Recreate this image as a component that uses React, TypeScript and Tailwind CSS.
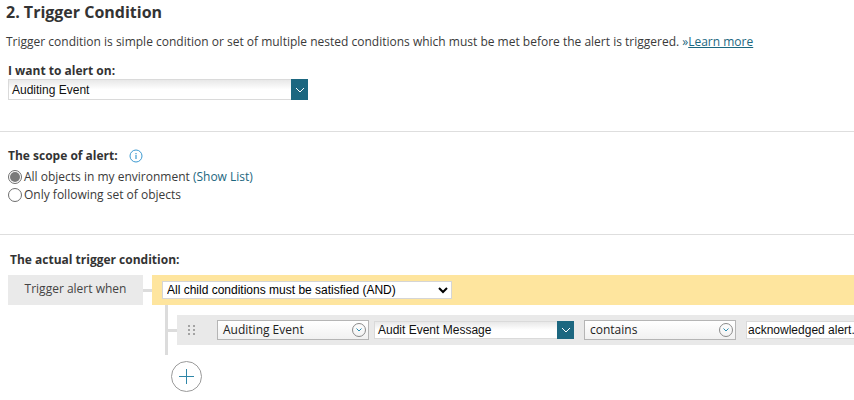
const openSans = 'font-["Open_Sans",sans-serif]';

function Chevron({ className }: { className: string }) {
  return (
    <svg className={className} width="10" height="6" viewBox="0 0 10 6" fill="none" stroke="currentColor" strokeWidth="1">
      <path d="M1 1l4 4 4-4" />
    </svg>
  );
}

function TealSelect({ value, width, height }: { value: string; width: string; height: string }) {
  return (
    <div className={`flex ${width} ${height} shrink-0`}>
      <div className="flex-1 min-w-0 flex items-center pl-[3px] bg-gradient-to-b from-[#e8e8e8] via-white to-white border border-[#dadada] border-r-0 font-['Liberation_Sans',sans-serif] text-[12px] text-[#111]">
        {value}
      </div>
      <div className="w-[17px] bg-[#1c6780] flex items-center justify-center text-white">
        <Chevron className="text-white" />
      </div>
    </div>
  );
}

function RoundSelect({ value, width }: { value: string; width: string }) {
  return (
    <div className={`flex items-center justify-between h-[20px] ${width} shrink-0 border border-[#b5b5b5] bg-gradient-to-b from-white to-[#f1f1f1] pl-[5px] pr-[2px] ${openSans} text-[12px] text-[#222]`}>
      <span>{value}</span>
      <span className="w-[14px] h-[14px] rounded-full border border-[#8a8a8a] flex items-center justify-center">
        <svg width="6" height="4" viewBox="0 0 6 4" fill="none" stroke="#2a8cb0" strokeWidth="1">
          <path d="M0.5 0.5l2.5 2.5 2.5-2.5" />
        </svg>
      </span>
    </div>
  );
}

function Radio({ checked }: { checked?: boolean }) {
  return (
    <span className="w-[14px] h-[14px] rounded-full border border-[#6e6e6e] bg-white flex items-center justify-center shrink-0">
      {checked && <span className="w-[10px] h-[10px] rounded-full bg-[#7a7a7a]" />}
    </span>
  );
}

export default function App() {
  return (
    <div className={`w-[854px] h-[400px] overflow-hidden bg-white text-[#3a3a3a] ${openSans}`}>
      {/* Header */}
      <h2 className="pl-[6px] pt-[1px] h-[23px] text-[16px] leading-[22px] font-bold text-[#333]">2. Trigger Condition</h2>
      <p className="pl-[6px] mt-[10px] h-[17px] text-[12px] leading-[17px] whitespace-nowrap">
        Trigger condition is simple condition or set of multiple nested conditions which must be met before the alert is triggered.{' '}
        <span className="text-[#1c6780]">»</span>
        <span className="text-[#1c6780] underline">Learn more</span>
      </p>

      {/* Alert on */}
      <div className="pl-[8px] mt-[13px]">
        <div className="h-[16px] text-[12px] leading-[16px] font-bold text-[#333]">I want to alert on:</div>
        <TealSelect value="Auditing Event" width="w-[300px]" height="h-[21px]" />
      </div>

      <div className="mt-[31px] border-t border-[#dedede]" />

      {/* Scope */}
      <div className="pl-[8px] mt-[16px]">
        <div className="flex items-center gap-[11px] h-[16px]">
          <span className="text-[12px] leading-[16px] font-bold text-[#333]">The scope of alert:</span>
          <svg width="14" height="14" viewBox="0 0 14 14" fill="none">
            <circle cx="7" cy="7" r="6" stroke="#3d9ad1" strokeWidth="1" />
            <path d="M7 6v4M7 4v1.2" stroke="#3d9ad1" strokeWidth="1.2" />
          </svg>
        </div>
        <div className="mt-[4px] flex items-center gap-[2px] h-[17px] text-[12px] leading-[17px]">
          <Radio checked />
          <span>
            All objects in my environment <span className="text-[#1c6780]">(Show List)</span>
          </span>
        </div>
        <div className="mt-[1px] flex items-center gap-[2px] h-[17px] text-[12px] leading-[17px]">
          <Radio />
          <span>Only following set of objects</span>
        </div>
      </div>

      <div className="mt-[31px] border-t border-[#dedede]" />

      {/* Trigger condition */}
      <div className="pl-[10px] mt-[17px] h-[16px] text-[12px] leading-[16px] font-bold text-[#333]">The actual trigger condition:</div>

      <div className="pl-[8px] mt-[7px]">
        <div className="flex items-center h-[30px]">
          <div className="w-[135px] h-full bg-[#eaeaea] flex items-center justify-center text-[12px] text-[#444] pb-[2px]">Trigger alert when</div>
          <div className="w-[9px] h-[3px] bg-[#dcdcdc]" />
          <div className="flex-1 h-full bg-[#fee59e] flex items-center pl-[10px]">
            <select defaultValue="and" className="w-[290px] h-[18px] bg-white border border-[#d5d5d5] font-['Liberation_Sans',sans-serif] text-[12px] text-black appearance-auto">
              <option value="and">All child conditions must be satisfied (AND)</option>
            </select>
          </div>
        </div>

        <div className="flex pl-[157px]">
          <div className="w-[3px] h-[50px] bg-[#dcdcdc]" />
          <div className="flex-1 min-w-0">
            <div className="flex items-center mt-[10px]">
              <div className="w-[9px] h-[3px] bg-[#dcdcdc]" />
              <div className="flex-1 min-w-0 h-[30px] bg-[#e9e9e9] flex items-center pl-[11px] gap-[5px] overflow-hidden">
                <svg className="shrink-0 mr-[16px]" width="8" height="10" viewBox="0 0 8 10" fill="#a3a3a3">
                  <rect x="0" y="0" width="2" height="2" /><rect x="5" y="0" width="2" height="2" />
                  <rect x="0" y="4" width="2" height="2" /><rect x="5" y="4" width="2" height="2" />
                  <rect x="0" y="8" width="2" height="2" /><rect x="5" y="8" width="2" height="2" />
                </svg>
                <RoundSelect value="Auditing Event" width="w-[152px]" />
                <TealSelect value="Audit Event Message" width="w-[200px]" height="h-[18px]" />
                <div className="ml-[5px]">
                  <RoundSelect value="contains" width="w-[152px]" />
                </div>
                <div className="ml-[5px] h-[18px] w-[108px] shrink-0 bg-white border border-[#dadada] border-r-0 pl-[1px] font-['Liberation_Sans',sans-serif] text-[12px] leading-[16px] text-[#111] whitespace-nowrap">
                  acknowledged alert.
                </div>
              </div>
            </div>
          </div>
        </div>

        <div className="pl-[163px] mt-[6px]">
          <div className="w-[31px] h-[31px] rounded-full border border-[#9a9a9a] flex items-center justify-center">
            <svg width="15" height="15" viewBox="0 0 15 15" stroke="#2f86a8" strokeWidth="1">
              <path d="M7.5 0v15M0 7.5h15" />
            </svg>
          </div>
        </div>
      </div>
    </div>
  );
}
